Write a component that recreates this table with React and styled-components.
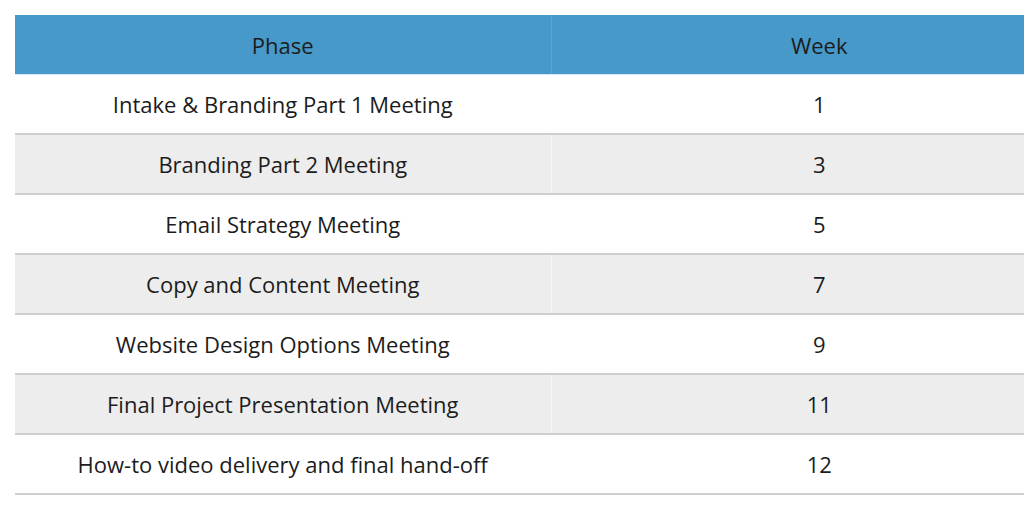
import React from "react"
import styled, { createGlobalStyle } from "styled-components"

const GlobalStyle = createGlobalStyle`
  html, body {
    margin: 0;
    padding: 0;
    background: #ffffff;
  }
  body {
    font-family: "Open Sans", "Noto Sans", sans-serif;
  }
`

const Page = styled.div`
  width: 100vw;
  overflow: hidden;
  padding: 15px 0 0 15px;
  box-sizing: border-box;
`

const Table = styled.table`
  width: 1072px;
  border-collapse: collapse;
  table-layout: fixed;
  font-size: 22px;
  color: #1c1c1c;
`

const HeadCell = styled.th`
  height: 59px;
  padding: 0;
  background: #4799c9;
  font-weight: 400;
  text-align: center;
  border-bottom: 1px solid #d4e8f4;
  border-left: ${props => (props.first ? "none" : "1px solid rgba(255, 255, 255, 0.12)")};
`

const Row = styled.tr`
  background: ${props => (props.striped ? "#ededed" : "#ffffff")};
`

const Cell = styled.td`
  height: 58px;
  padding: 0;
  text-align: center;
  border-bottom: 2px solid #cfcfcf;
  border-left: ${props => (props.first ? "none" : "1px solid rgba(255, 255, 255, 0.5)")};
`

const rows = [
  ["Intake & Branding Part 1 Meeting", "1"],
  ["Branding Part 2 Meeting", "3"],
  ["Email Strategy Meeting", "5"],
  ["Copy and Content Meeting", "7"],
  ["Website Design Options Meeting", "9"],
  ["Final Project Presentation Meeting", "11"],
  ["How-to video delivery and final hand-off", "12"],
]

export default function App() {
  return (
    <>
      <GlobalStyle />
      <Page>
        <Table>
          <thead>
            <tr>
              <HeadCell first>Phase</HeadCell>
              <HeadCell>Week</HeadCell>
            </tr>
          </thead>
          <tbody>
            {rows.map(([phase, week], i) => (
              <Row key={phase} striped={i % 2 === 1}>
                <Cell first>{phase}</Cell>
                <Cell>{week}</Cell>
              </Row>
            ))}
          </tbody>
        </Table>
      </Page>
    </>
  )
}
